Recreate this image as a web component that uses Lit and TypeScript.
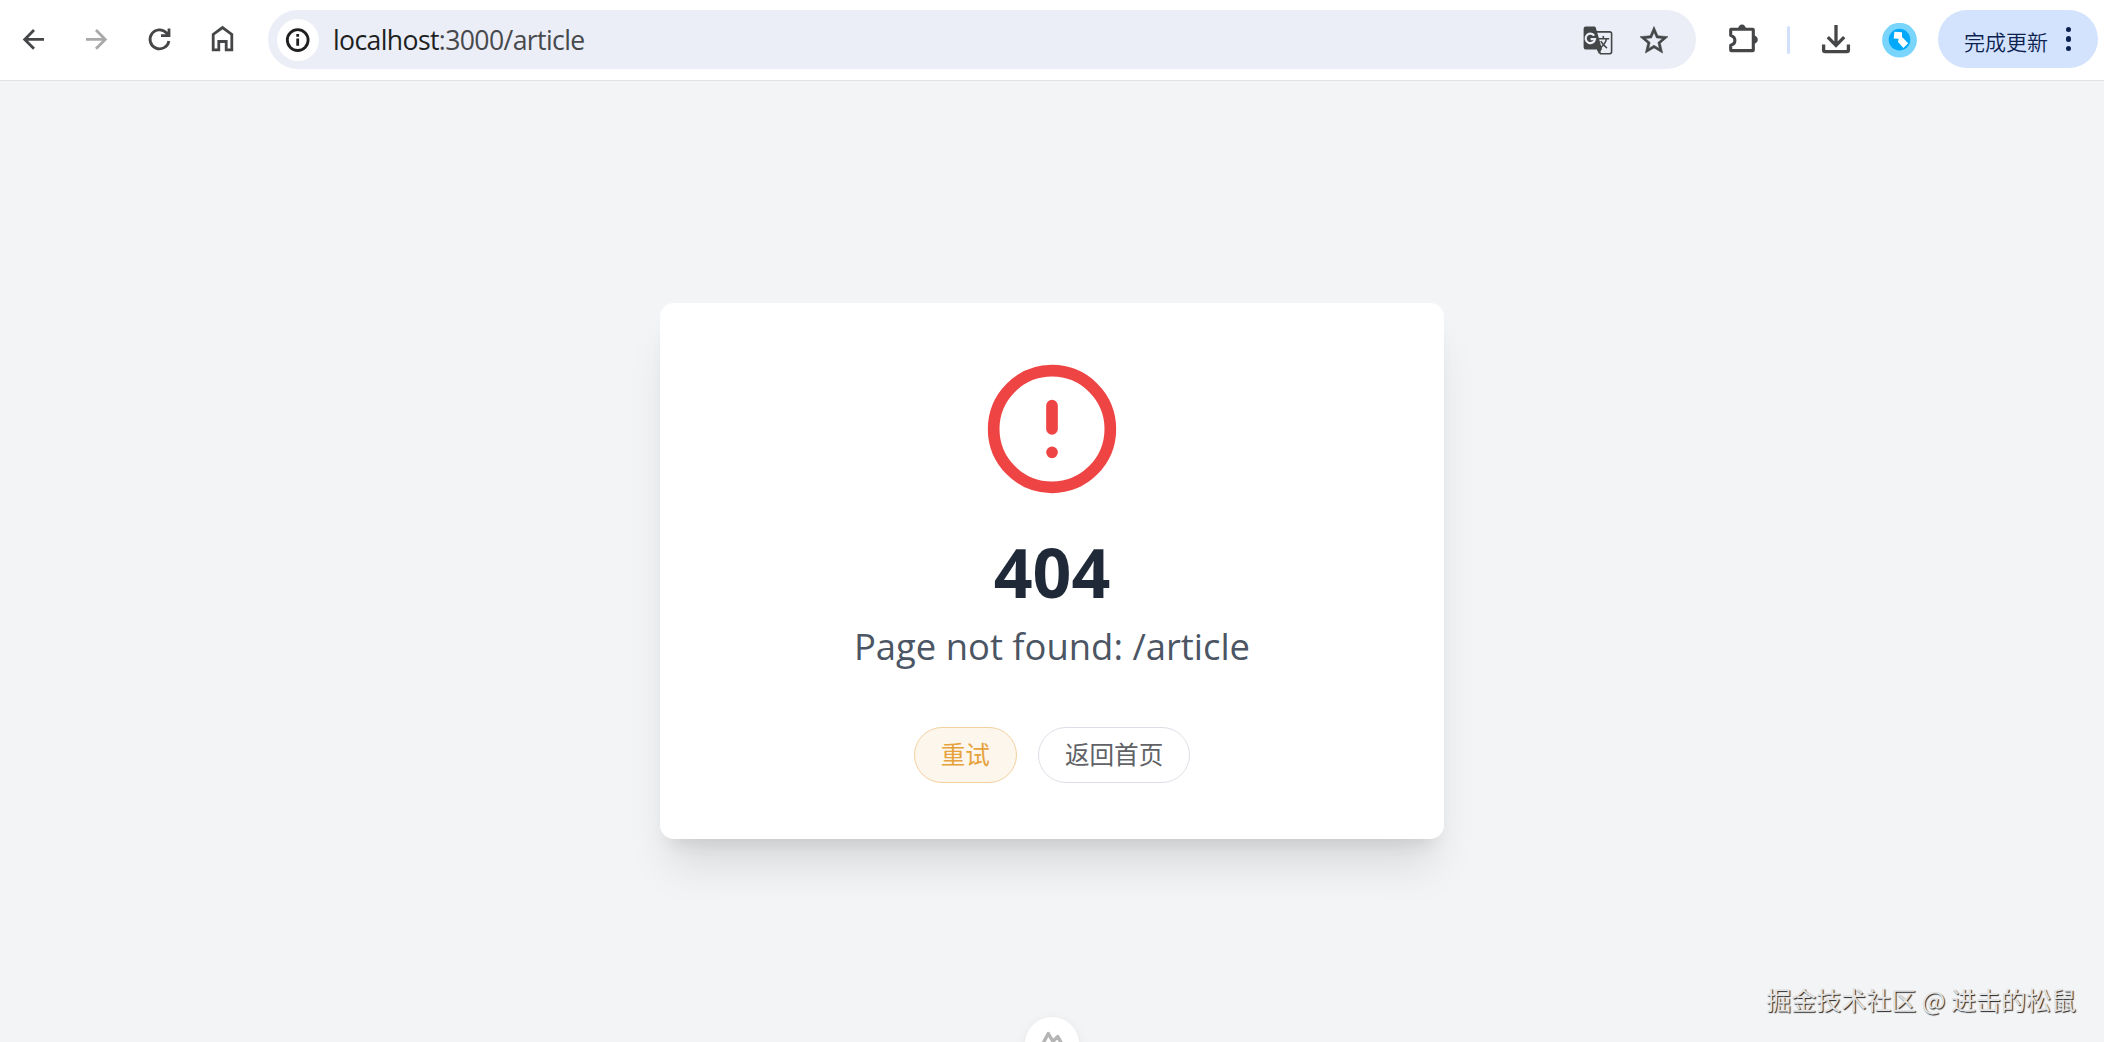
import { html, css, svg, LitElement } from 'lit'
import { customElement, property } from 'lit/decorators.js'

const icons = {
  back: svg`<path d="M28 17.4H9M18 8l-9.3 9.4L18 26.8" />`,
  forward: svg`<path d="M7 17.4h19M17 8l9.3 9.4L17 26.8" />`,
  reload: svg`<path d="M26.9 18.9a9.5 9.5 0 1 1-2.3-7.9l2.2 2.4M27 6.5v7.2h-8" />`,
  home: svg`<path d="M8.2 27.9V12.4l9.3-6.8 9.3 6.8v15.5h-5.6v-8.4h-7.4v8.4z" />`,
  info: svg`<circle cx="17.7" cy="18.1" r="10.4" /><path d="M17.7 16.6v7.2M17.7 12v2.7" />`,
  star: svg`<path class="solid heavy" transform="translate(1.2 1.7) scale(1.4)" d="M22 9.24l-7.19-.62L12 2 9.19 8.63 2 9.24l5.46 4.73L5.82 21 12 17.27 18.18 21l-1.63-7.03L22 9.24zM12 15.4l-3.76 2.27 1-4.28-3.32-2.88 4.38-.38L12 6.1l1.71 4.04 4.38.38-3.32 2.88 1 4.28L12 15.4z" />`,
  translate: svg`
    <path class="thin" d="M15.500 9.900h14.200q1.900 0 1.900 1.900v18q0 1.900-1.900 1.900H20.500l-2.400-4.400" />
    <path class="solid" d="M5.800 4.500h8.400q1.200 0 1.600 1.200l6.200 21.200-3 5.200-2.200-4.600H5.800q-2.200 0-2.200-2.200V6.700q0-2.200 2.200-2.200z" />
    <path class="letter" d="M14.200 13.700a4.700 4.700 0 1 0 .8 3.400h-4.400" />
    <path class="thin" d="M18.500 16.700h10.700M23.300 13.900v2.800M26.600 16.900q-1.600 5.600-6.400 9M20.800 19.100q2.200 4 6.200 7" />`,
  extension: svg`
    <path class="round" d="M4.800 7.300h21.900q.6 0 .6.6v20q0 .7-.6.700H5.400q-.7 0-.7-.7v-4.600q4.200-1.400 4.200-4.900t-4.200-5.200V7.900q0-.6.600-.6z" />
    <path class="solid" d="M12 7a4 4.400 0 0 1 8 0zM27.600 13.600a4.200 4.100 0 0 1 0 8.200z" />`,
  download: svg`<path class="bold" d="M18 3v19.500M9.800 15.200l8.200 8.200 8.200-8.200M5.600 22.600V28q0 1.600 1.600 1.600h21.600q1.600 0 1.600-1.600v-5.400" />`
}

@customElement('toolbar-icon')
export class ToolbarIcon extends LitElement {
  @property({ type: String }) name: keyof typeof icons = 'back'

  static styles = css`
    :host {
      display: block;
      flex: none;
      width: 36px;
      height: 36px;
    }

    .icon {
      display: block;
      fill: none;
      stroke: currentColor;
      stroke-width: 2.8;
    }

    .round {
      stroke-linejoin: round;
      stroke-width: 3.1;
    }

    .bold {
      stroke-width: 3.3;
    }

    .solid {
      fill: currentColor;
      stroke: none;
    }

    .heavy {
      stroke: currentColor;
      stroke-width: 0.4;
    }

    .thin {
      stroke-width: 1.6;
    }

    .letter {
      stroke: #edf0f8;
      stroke-width: 2.2;
    }
  `

  render() {
    return html`
      <svg class="icon" width="36" height="36" viewBox="0 0 36 36">
        ${icons[this.name]}
      </svg>
    `
  }
}

@customElement('browser-toolbar')
export class BrowserToolbar extends LitElement {
  @property({ type: String }) host = ''
  @property({ type: String }) path = ''

  static styles = css`
    :host {
      display: flex;
      align-items: center;
      flex: none;
      box-sizing: border-box;
      height: 81px;
      padding: 0 6px 0 16px;
      background: #fff;
      border-bottom: 1px solid #e0e2e5;
      color: #454648;
    }

    .nav {
      display: flex;
      gap: 27px;
      margin-right: 27px;
    }

    .disabled {
      color: #a9a9aa;
    }

    .address {
      display: flex;
      align-items: center;
      flex: 1;
      box-sizing: border-box;
      height: 59px;
      margin-bottom: 1px;
      padding: 0 24px 0 9px;
      border-radius: 30px;
      background: #ebeef7;
    }

    .site-info {
      display: flex;
      align-items: center;
      justify-content: center;
      width: 42px;
      height: 42px;
      margin-right: 14px;
      border-radius: 50%;
      background: #fff;
      color: #1f1f20;
    }

    .url {
      flex: 1;
      font-size: 26.6px;
      line-height: 42px;
      letter-spacing: -0.62px;
      color: #47494d;
      white-space: nowrap;
    }

    .host {
      color: #1e1f21;
    }

    .actions {
      display: flex;
      gap: 20px;
    }

    .extension {
      margin-left: 30px;
    }

    .divider {
      width: 3px;
      height: 28px;
      margin: 0 28px 0 25px;
      border-radius: 2px;
      background: #d3e0fc;
    }

    .avatar {
      flex: none;
      margin: 0 21px 0 28px;
    }

    .update {
      display: flex;
      align-items: center;
      justify-content: space-between;
      box-sizing: border-box;
      width: 160px;
      height: 58px;
      margin-bottom: 2px;
      padding: 0 27px 0 26px;
      border-radius: 30px;
      background: #d3e2fd;
      color: #0b2250;
      font-size: 21px;
      font-weight: 350;
      white-space: nowrap;
    }

    .label {
      margin-top: 3px;
    }

    .dots {
      display: flex;
      flex-direction: column;
      gap: 4.2px;
    }

    .dot {
      width: 5.4px;
      height: 5.4px;
      border-radius: 50%;
      background: currentColor;
    }
  `

  render() {
    return html`
      <div class="nav">
        <toolbar-icon name="back"></toolbar-icon>
        <toolbar-icon class="disabled" name="forward"></toolbar-icon>
        <toolbar-icon name="reload"></toolbar-icon>
        <toolbar-icon name="home"></toolbar-icon>
      </div>
      <div class="address">
        <div class="site-info"><toolbar-icon name="info"></toolbar-icon></div>
        <div class="url"><span class="host">${this.host}</span>${this.path}</div>
        <div class="actions">
          <toolbar-icon name="translate"></toolbar-icon>
          <toolbar-icon name="star"></toolbar-icon>
        </div>
      </div>
      <toolbar-icon class="extension" name="extension"></toolbar-icon>
      <div class="divider"></div>
      <toolbar-icon name="download"></toolbar-icon>
      <svg class="avatar" width="35" height="35" viewBox="0 0 35 35">
        <circle cx="17.5" cy="17.2" r="17.4" fill="#7ad5fc" />
        <circle cx="17.5" cy="16.6" r="10.8" fill="#02a9fb" />
        <path
          d="M12.400 8.800l7.600.500v4.700l6.200 6.200-4.800 4.800-5.400-6 .600-3.200-4.900-.300z"
          fill="#fff"
        />
      </svg>
      <div class="update">
        <span class="label">完成更新</span>
        <div class="dots">
          <div class="dot"></div>
          <div class="dot"></div>
          <div class="dot"></div>
        </div>
      </div>
    `
  }
}

@customElement('error-card')
export class ErrorCard extends LitElement {
  @property({ type: Number }) status = 404
  @property({ type: String }) message = ''

  static styles = css`
    :host {
      display: flex;
      flex-direction: column;
      align-items: center;
      box-sizing: border-box;
      width: 784px;
      height: 536px;
      padding: 56px;
      border-radius: 14px;
      background: #fff;
      box-shadow:
        0 35px 44px -9px rgba(0, 0, 0, 0.1),
        0 14px 18px -10px rgba(0, 0, 0, 0.1);
    }

    .alert {
      flex: none;
      fill: none;
      stroke: #ef4444;
      stroke-width: 2;
      stroke-linecap: round;
    }

    .status {
      margin: 38px 0 0;
      font-size: 68px;
      font-weight: 700;
      line-height: 70px;
      color: #1f2937;
    }

    .message {
      margin: 15px 0 0;
      font-size: 36.4px;
      line-height: 49px;
      color: #4b5563;
      white-space: nowrap;
    }

    .buttons {
      display: flex;
      gap: 21px;
      margin-top: 56px;
    }

    .button {
      box-sizing: border-box;
      height: 56px;
      padding: 0 26px;
      border: 1px solid #dcdfe6;
      border-radius: 28px;
      background: #fff;
      color: #606266;
      font-family: inherit;
      font-size: 24.6px;
      line-height: 1;
      cursor: pointer;
    }

    .warning {
      border-color: #f3d19e;
      background: #fdf6ec;
      color: #e6a23c;
    }
  `

  private emit(name: string) {
    this.dispatchEvent(new CustomEvent(name, { bubbles: true, composed: true }))
  }

  render() {
    return html`
      <svg class="alert" width="140" height="140" viewBox="0 0 24 24">
        <circle cx="12" cy="12" r="10" />
        <path d="M12 8v4M12 16h.01" />
      </svg>
      <h1 class="status">${this.status}</h1>
      <p class="message">${this.message}</p>
      <div class="buttons">
        <button class="button warning" @click=${() => this.emit('retry')}>
          重试
        </button>
        <button class="button" @click=${() => this.emit('go-home')}>
          返回首页
        </button>
      </div>
    `
  }
}

@customElement('app-root')
export class AppRoot extends LitElement {
  @property({ type: String }) path = '/article'

  static styles = css`
    :host {
      position: relative;
      display: flex;
      flex-direction: column;
      width: 100%;
      height: 100vh;
      overflow: hidden;
      background: #f3f4f6;
      font-family: 'Open Sans', 'Noto Sans CJK SC', sans-serif;
    }

    .page {
      display: flex;
      align-items: flex-start;
      justify-content: center;
      flex: 1;
      padding-top: 222px;
    }

    .devtools {
      position: absolute;
      left: 50%;
      bottom: -29px;
      display: flex;
      justify-content: center;
      width: 54px;
      height: 54px;
      margin-left: -27px;
      border-radius: 50%;
      background: #fff;
      box-shadow: 0 2px 12px rgba(0, 0, 0, 0.06);
    }

    .peaks {
      margin-top: 13px;
      fill: none;
      stroke: #b5b5b5;
      stroke-width: 3.4;
      stroke-linejoin: round;
    }

    .watermark {
      position: absolute;
      right: 28px;
      bottom: 25px;
      font-family: 'Noto Sans CJK SC', sans-serif;
      font-size: 25px;
      line-height: 36px;
      color: #e4e4e4;
      text-shadow: 1px 1px 1px #222;
      white-space: nowrap;
    }
  `

  render() {
    return html`
      <browser-toolbar host="localhost" path=":3000${this.path}"></browser-toolbar>
      <main class="page">
        <error-card message="Page not found: ${this.path}"></error-card>
      </main>
      <div class="devtools">
        <svg class="peaks" width="28" height="20" viewBox="0 0 28 20">
          <path d="M2 19L10.3 3.500l7 12M14.500 12L19.800 6.500l6.700 12.500" />
        </svg>
      </div>
      <div class="watermark">掘金技术社区 @ 进击的松鼠</div>
    `
  }
}
